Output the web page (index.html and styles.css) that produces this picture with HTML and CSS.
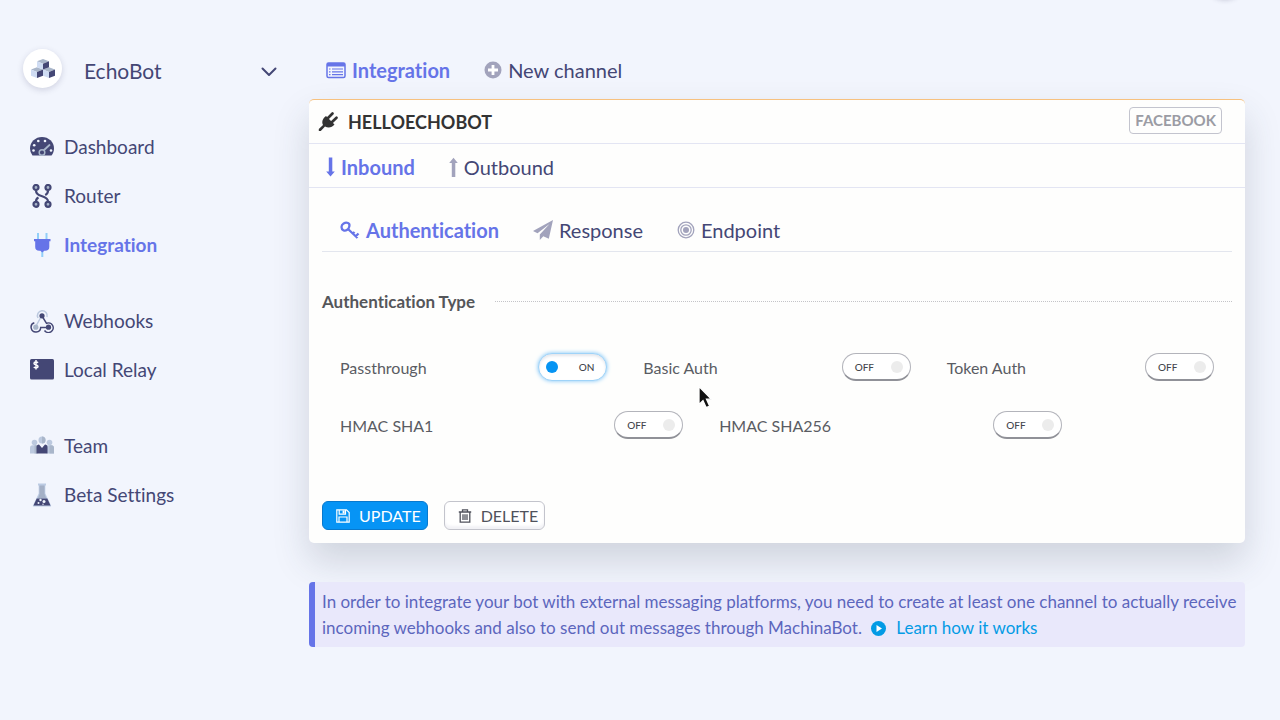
FILE: index.html
```html
<!DOCTYPE html>
<html lang="en">
<head>
<meta charset="utf-8">
<meta name="viewport" content="width=device-width, initial-scale=1">
<title>EchoBot - Integration</title>
<link rel="stylesheet" href="styles.css">
</head>
<body>
<div class="floating-button"></div>
<div class="app">
  <aside class="sidebar">
    <button class="bot-picker" type="button">
      <span class="avatar">
        <svg width="24" height="19" viewBox="0 0 24 19" aria-hidden="true">
          <path fill="#a9b6ca" d="M6 2.3 12 0l6 2.3-6 2.4zM0 10.5l6-2.3 6 2.3-6 2.4zM12 10.5l6-2.3 6 2.3-6 2.4z"/>
          <path fill="#cfdcf3" d="M6 2.3l6 2.4V10.500L6 8.200zM0 10.500l6 2.400V19l-6-2.300zM12 10.500l6 2.400V19l-6-2.300z"/>
          <path fill="#444775" d="M18 2.300l-6 2.400v5.800l6-2.300zM12 10.500l-6 2.400V19l6-2.300zM24 10.500l-6 2.400V19l6-2.300z"/>
        </svg>
      </span>
      <span class="bot-name">EchoBot</span>
      <svg class="chevron" width="16" height="10" viewBox="0 0 16 10" aria-hidden="true"><path d="M1.500 1.500 8 8l6.500-6.500" fill="none" stroke="#444775" stroke-width="2" stroke-linecap="round" stroke-linejoin="round"/></svg>
    </button>
    <nav class="nav">
      <div class="nav-group">
        <a class="nav-link" href="#"><svg width="24" height="24" viewBox="0 0 24 24" aria-hidden="true"><path fill="#444775" d="M2.500 20.500A12 11.500 0 0 1 0 13.500a12 11.500 0 0 1 24 0c0 2.600-.9 5-2.500 7z"/><g fill="#f1f5fd"><circle cx="3.500" cy="15.500" r="1.300"/><circle cx="4.200" cy="10.200" r="1.300"/><circle cx="8.300" cy="6" r="1.300"/><circle cx="15" cy="6" r="1.300"/><circle cx="21" cy="15.500" r="1.300"/></g><path d="m13 16 6.500-6" stroke="#a9b6ca" stroke-width="1.800" stroke-linecap="round"/><circle cx="12" cy="17.500" r="2.800" fill="#444775" stroke="#a9b6ca" stroke-width="1.500"/></svg>Dashboard</a>
        <a class="nav-link" href="#"><svg width="24" height="24" viewBox="0 0 24 24" aria-hidden="true"><g fill="#a9b6ca" stroke="#444775" stroke-width="2.200"><path fill="none" d="M6 6.500c0 3 2 4.500 5.500 5.500s6.500 2 6.500 5.500M18 6.500c0 2-1 3.500-2.800 4.500M6 17.500c0-2 .8-3.200 2.500-4"/><circle cx="6" cy="3.500" r="2.500"/><circle cx="18" cy="3.500" r="2.500"/><circle cx="6" cy="20.300" r="2.500"/><circle cx="18" cy="20.300" r="2.500"/></g></svg>Router</a>
        <a class="nav-link active" href="#" aria-current="page"><svg width="24" height="24" viewBox="0 0 24 24" aria-hidden="true"><path stroke="#92cff9" stroke-width="2" d="M8 0v7M16.500 0v7M12.300 17v7"/><path fill="#6674e8" d="M4 6h16.500v2.200h-1.200V14c0 2.500-1.500 3.800-4 3.800h-1l-2 1.700-2-1.700H9.200c-2.500 0-4-1.300-4-3.800V8.200H4z"/></svg>Integration</a>
      </div>
      <div class="nav-group">
        <a class="nav-link" href="#"><svg width="24" height="24" viewBox="0 0 24 24" fill="none" stroke-width="1.500" aria-hidden="true"><path stroke="#bcc9df" d="M8 9a4.900 4.900 0 1 1 9-1M11 8l-5 9"/><path stroke="#444775" d="M12 7l4.500 7.300a4.800 4.800 0 1 1-2 7.200M4.300 13.700a4.800 4.800 0 1 0 6.400 4.800H18"/><circle cx="12" cy="6.800" r="2.600" fill="#444775"/><circle cx="18.500" cy="18.200" r="2.600" fill="#444775"/><circle cx="5.800" cy="18.200" r="2.600" fill="#a9b6ca"/></svg>Webhooks</a>
        <a class="nav-link" href="#"><svg width="24" height="24" viewBox="0 0 24 24" aria-hidden="true"><rect y="1" width="24" height="20.500" rx="1.500" fill="#444775"/><path d="M8 4.800c-.8-1-4-1.100-4 .6 0 2 4 .9 4 3 0 1.700-3.200 1.700-4.200.6M6 2v9.500" fill="none" stroke="#fff" stroke-width="1.500"/></svg>Local Relay</a>
      </div>
      <div class="nav-group">
        <a class="nav-link" href="#"><svg width="24" height="24" viewBox="0 0 24 24" aria-hidden="true"><g fill="#bcc9df"><circle cx="4.500" cy="8.500" r="2.800"/><circle cx="19.500" cy="8.500" r="2.800"/><circle cx="12" cy="6" r="3.500"/><path d="M0 19.500V14c0-1.700 1-2.700 2.500-2.700h5v8.200zM16.500 11.300h5C23 11.300 24 12.300 24 14v5.500h-7.500z"/></g><path fill="#a9b6ca" d="M12 2.500a3.500 3.500 0 0 1 0 7zM4.500 11.300h2.800v8.200H4.500zM19.500 11.300h2c1.500 0 2.500 1 2.500 2.700v5.500h-4.500z"/><path fill="#444775" d="M6.500 19.500V13c0-1.500 1-2.500 2.500-2.500L12 14l3-3.500c1.500 0 2.500 1 2.500 2.500v6.500z"/></svg>Team</a>
        <a class="nav-link" href="#"><svg width="24" height="24" viewBox="0 0 24 24" aria-hidden="true"><path fill="#bccbe3" d="M8 .5h8v2h-.7v8L21 22.500c.4.800 0 1-.7 1H3.700c-.7 0-1.100-.2-.7-1l5.700-12v-8H8z"/><path fill="#a4b0c6" d="M9.500 2.500h5v8.300l1.600 4.200H8l1.500-4z"/><path fill="#444775" d="M6.700 15.500h10.600l3.200 7H3.500z"/><g fill="#f1f5fd"><circle cx="10.500" cy="17" r="1.200"/><circle cx="14" cy="18.500" r="1.500"/><circle cx="8.500" cy="20" r="1"/><circle cx="13" cy="21.300" r=".7"/></g></svg>Beta Settings</a>
      </div>
    </nav>
  </aside>

  <main class="main">
    <nav class="tabs page-tabs">
      <a class="tab active" href="#"><svg width="20" height="20" viewBox="0 0 20 20" aria-hidden="true"><rect x="1" y="3" width="18" height="14.500" rx="1.500" fill="none" stroke="#6674e8" stroke-width="1.500"/><path fill="#6674e8" d="M1 3h18v3.500H1z"/><path stroke="#6674e8" stroke-width="1.200" d="M3 9h1.500M3 11.800h1.500M3 14.600h1.500M6 9h11M6 11.800h11M6 14.600h11"/></svg>Integration</a>
      <a class="tab" href="#"><svg width="18" height="18" viewBox="0 0 18 18" aria-hidden="true"><circle cx="9" cy="9" r="8.500" fill="#a2a3bc"/><path d="M9 4v10M4 9h10" stroke="#fff" stroke-width="2.800"/></svg>New channel</a>
    </nav>

    <section class="card">
      <header class="card-header">
        <svg width="20" height="20" viewBox="0 0 20 20" aria-hidden="true"><path fill="#333" d="m8 4 8.500 8.500c-2.500 3-6 4-9.500 2L2.800 19H.8v-2L5 13C3.500 10 4.500 6.500 8 4z"/><path d="m9.500 6.500 5-5M13.500 10.500l5-4.800" stroke="#333" stroke-width="2.600" stroke-linecap="round"/></svg>
        <h1 class="card-title">HELLOECHOBOT</h1>
        <span class="badge">FACEBOOK</span>
      </header>
      <nav class="tabs direction-tabs">
        <a class="tab active" href="#"><svg width="9" height="20" viewBox="0 0 9 20" aria-hidden="true"><path fill="#6674e8" d="M2.800.5h3.500v14h2.500L4.500 19.500.2 14.500h2.600z"/></svg>Inbound</a>
        <a class="tab" href="#"><svg width="9" height="20" viewBox="0 0 9 20" aria-hidden="true"><path fill="#a2a3bc" d="M2.800 20h3.500V6h2.500L4.500.8.200 6h2.600z"/></svg>Outbound</a>
      </nav>
      <div class="card-body">
        <nav class="tabs detail-tabs">
          <a class="tab active" href="#"><svg width="20" height="20" viewBox="0 0 20 20" aria-hidden="true"><g fill="none" stroke="#6674e8" stroke-width="2.300"><path d="M1.500 7c0-3 3.500-5 6.500-4 2.500 1 1.500 5-.8 6.800C4.500 11.500 1.500 10 1.500 7zM8 9l9.500 9M12.500 14l2-2M15.500 16.500l3-3"/></g></svg>Authentication</a>
          <a class="tab" href="#"><svg width="20" height="20" viewBox="0 0 20 20" aria-hidden="true"><path fill="#a2a3bc" d="M20 0 0 11l4.500 2.200L16.500 4 6.800 14.500V20l3.500-3.800 5.500 2.600z"/></svg>Response</a>
          <a class="tab" href="#"><svg width="18" height="18" viewBox="0 0 18 18" aria-hidden="true"><g fill="none" stroke="#a2a3bc" stroke-width="1.300"><circle cx="9" cy="9" r="7.800"/><circle cx="9" cy="9" r="5.200"/></g><circle cx="9" cy="9" r="3" fill="#a2a3bc"/></svg>Endpoint</a>
        </nav>
        <form>
          <div role="group" aria-labelledby="auth-type">
            <h2 class="section-title" id="auth-type">Authentication Type</h2>
            <div class="options">
              <div class="option"><label for="passthrough">Passthrough</label><span class="switch on"><input id="passthrough" type="checkbox" checked><span class="state">ON</span></span></div>
              <div class="option"><label for="basic">Basic Auth</label><span class="switch"><input id="basic" type="checkbox"><span class="state">OFF</span></span></div>
              <div class="option"><label for="token">Token Auth</label><span class="switch"><input id="token" type="checkbox"><span class="state">OFF</span></span></div>
              <div class="option wide"><label for="sha1">HMAC SHA1</label><span class="switch"><input id="sha1" type="checkbox"><span class="state">OFF</span></span></div>
              <div class="option wide"><label for="sha256">HMAC SHA256</label><span class="switch"><input id="sha256" type="checkbox"><span class="state">OFF</span></span></div>
            </div>
          </div>
          <div class="actions">
            <button class="button primary" type="button"><svg width="14" height="14" viewBox="0 0 14 14" fill="none" stroke="#fff" stroke-width="1.200" aria-hidden="true"><path d="M.8.800h9.700l2.700 2.700v9.700H.800zM3 13V8h8v5M3.200 1v4.200h6.300V1"/><path stroke-width="2" d="M7.600 1.500v3"/></svg>UPDATE</button>
            <button class="button" type="button"><svg width="14" height="14" viewBox="0 0 14 14" fill="none" stroke="#50525c" stroke-width="1.300" aria-hidden="true"><path d="M.8 3h12.400M4.500 3V.800h5V3M2.200 3v10.200h9.600V3M5 5.200V11M7 5.200V11M9 5.200V11"/></svg>DELETE</button>
          </div>
        </form>
      </div>
    </section>

    <p class="note">In order to integrate your bot with external messaging platforms, you need to create at least one channel to actually receive incoming webhooks and also to send out messages through MachinaBot. <a class="learn" href="#"><svg width="15" height="15" viewBox="0 0 15 15" aria-hidden="true"><circle cx="7.500" cy="7.500" r="7.500" fill="#039be5"/><path fill="#fff" d="m5.500 4 5.500 3.500L5.500 11z"/></svg>Learn how it works</a></p>
  </main>
</div>
<svg class="cursor" width="18" height="26" viewBox="0 0 18 26" aria-hidden="true"><path d="M2 1.500v18l4-3.800 3.200 7 3.500-1.500-3.200-7h5z" fill="#111" stroke="#fff" stroke-width="1.300"/></svg>
</body>
</html>
```
FILE: styles.css
```css
* { box-sizing: border-box; }

body {
  margin: 0;
  min-height: 100vh;
  background: #f2f5fd;
  color: #444775;
  font-family: Lato, "Liberation Sans", sans-serif;
  font-size: 19px;
  font-variant-ligatures: none;
  overflow-x: hidden;
}

a { color: inherit; text-decoration: none; }

.app {
  display: grid;
  grid-template-columns: 309px minmax(0, 1fr);
  padding: 44px 35px 0 0;
}

.floating-button {
  position: absolute;
  top: -40px;
  right: 36px;
  width: 38px;
  height: 38px;
  border-radius: 50%;
  background: #fff;
  box-shadow: 0 2px 5px rgba(50, 50, 93, .25);
}

/* Sidebar */
.sidebar { padding: 0 32px 0 23px; }

.bot-picker {
  display: flex;
  align-items: center;
  width: 100%;
  height: 48px;
  padding: 0;
  border: 0;
  background: none;
  color: inherit;
  font: inherit;
  font-size: 21px;
  font-variant-ligatures: none;
  text-align: left;
}

.avatar {
  display: grid;
  place-items: center;
  width: 39px;
  height: 39px;
  border-radius: 50%;
  background: #fff;
  box-shadow: 0 2px 6px rgba(50, 50, 93, .18);
}

.bot-name { flex: 1; padding: 4px 0 0 22px; }
.chevron { margin-top: 8px; }

.nav { padding-top: 30px; }
.nav-group { margin-bottom: 27px; padding-left: 7px; }

.nav-link {
  display: flex;
  align-items: center;
  gap: 10px;
  height: 49px;
}

.nav-link.active, .tab.active { color: #6674e8; font-weight: 700; }

/* Tabs */
.tabs { display: flex; align-items: center; font-size: 20px; }
.tab { display: flex; align-items: center; gap: 6px; }

.page-tabs { gap: 34px; height: 55px; padding: 0 17px 3px; }
.direction-tabs { gap: 34px; height: 44px; padding: 2px 17px 0; border-bottom: 1px solid #e3e5f3; }
.detail-tabs { gap: 34px; height: 64px; padding: 20px 18px 0; border-bottom: 1px solid #e3e6ee; }

/* Card */
.card {
  border-top: 1px solid #f7c17f;
  border-radius: 5px;
  background: #fefefd;
  box-shadow: 0 18px 36px rgba(50, 60, 80, .18);
}

.card-header {
  display: flex;
  align-items: center;
  gap: 10px;
  height: 44px;
  padding: 0 23px 0 9px;
  border-bottom: 1px solid #e3e5f3;
  color: #333;
}

.card-title { flex: 1; margin: 0; font-size: 18px; font-weight: 700; }

.badge {
  margin-bottom: 3px;
  padding: 0 5px;
  border: 1px solid #c3c4ce;
  border-radius: 4px;
  color: #9b9ca4;
  font-size: 15px;
  font-weight: 700;
  line-height: 25px;
}

.card-body { padding: 0 13px 13px; }

.section-title {
  display: flex;
  align-items: center;
  gap: 20px;
  height: 20px;
  margin: 39px 0 42px;
  color: #55565a;
  font-size: 17px;
  font-weight: 700;
}

.section-title::after { content: ""; flex: 1; border-top: 1px dotted #c4c4c8; }

.options {
  display: grid;
  grid-template-columns: repeat(12, minmax(0, 1fr));
  row-gap: 30px;
  color: #5a5c63;
  font-size: 16px;
}

.option {
  grid-column: span 4;
  display: flex;
  align-items: center;
  justify-content: space-between;
  padding: 0 18px;
}

.option.wide { grid-column: span 5; }

.switch { display: grid; }
.switch > * { grid-area: 1 / 1; }

.switch input {
  display: flex;
  align-items: center;
  justify-content: flex-end;
  width: 69px;
  height: 28px;
  margin: 0;
  padding: 0 7px;
  border: 1px solid #b3b4bb;
  border-bottom: 2px solid #909198;
  border-radius: 14px;
  background: #fff;
  appearance: none;
}

.switch input::before {
  content: "";
  width: 12px;
  height: 12px;
  border-radius: 50%;
  background: #ececec;
}

.switch input:checked {
  justify-content: flex-start;
  border: 1px solid #9fd3f8;
  box-shadow: 0 0 4px #7cc4f8, inset 0 2px 3px #e4e6ec;
}

.switch input:checked::before { background: #0694f3; }

.state {
  align-self: center;
  padding: 0 13px;
  color: #44464d;
  font-size: 10px;
  font-weight: 500;
  pointer-events: none;
}

.switch.on .state { justify-self: end; }

/* Actions */
.actions { display: flex; gap: 16px; padding-top: 62px; }

.button {
  display: flex;
  align-items: center;
  gap: 9px;
  height: 29px;
  padding: 0 6px 0 13px;
  border: 1px solid #c3c4cc;
  border-radius: 6px;
  background: #fff;
  box-shadow: inset 0 -3px 3px #f2f2f6;
  color: #50525c;
  font: inherit;
  font-size: 16px;
}

.button.primary {
  border-color: #0879ce;
  background: #0694f5;
  box-shadow: none;
  color: #fff;
}

/* Note */
.note {
  position: relative;
  margin: 39px 0 0;
  padding: 7px 0 6px 7px;
  border-left: 6px solid #6674e8;
  border-radius: 4px;
  background: #e9e8fb;
  color: #5c66bd;
  font-size: 17px;
  line-height: 26px;
}

.learn { margin-left: 5px; color: #039be5; }
.learn svg { margin-right: 10px; vertical-align: -2px; }

.cursor { position: absolute; top: 385px; left: 697px; }
```
